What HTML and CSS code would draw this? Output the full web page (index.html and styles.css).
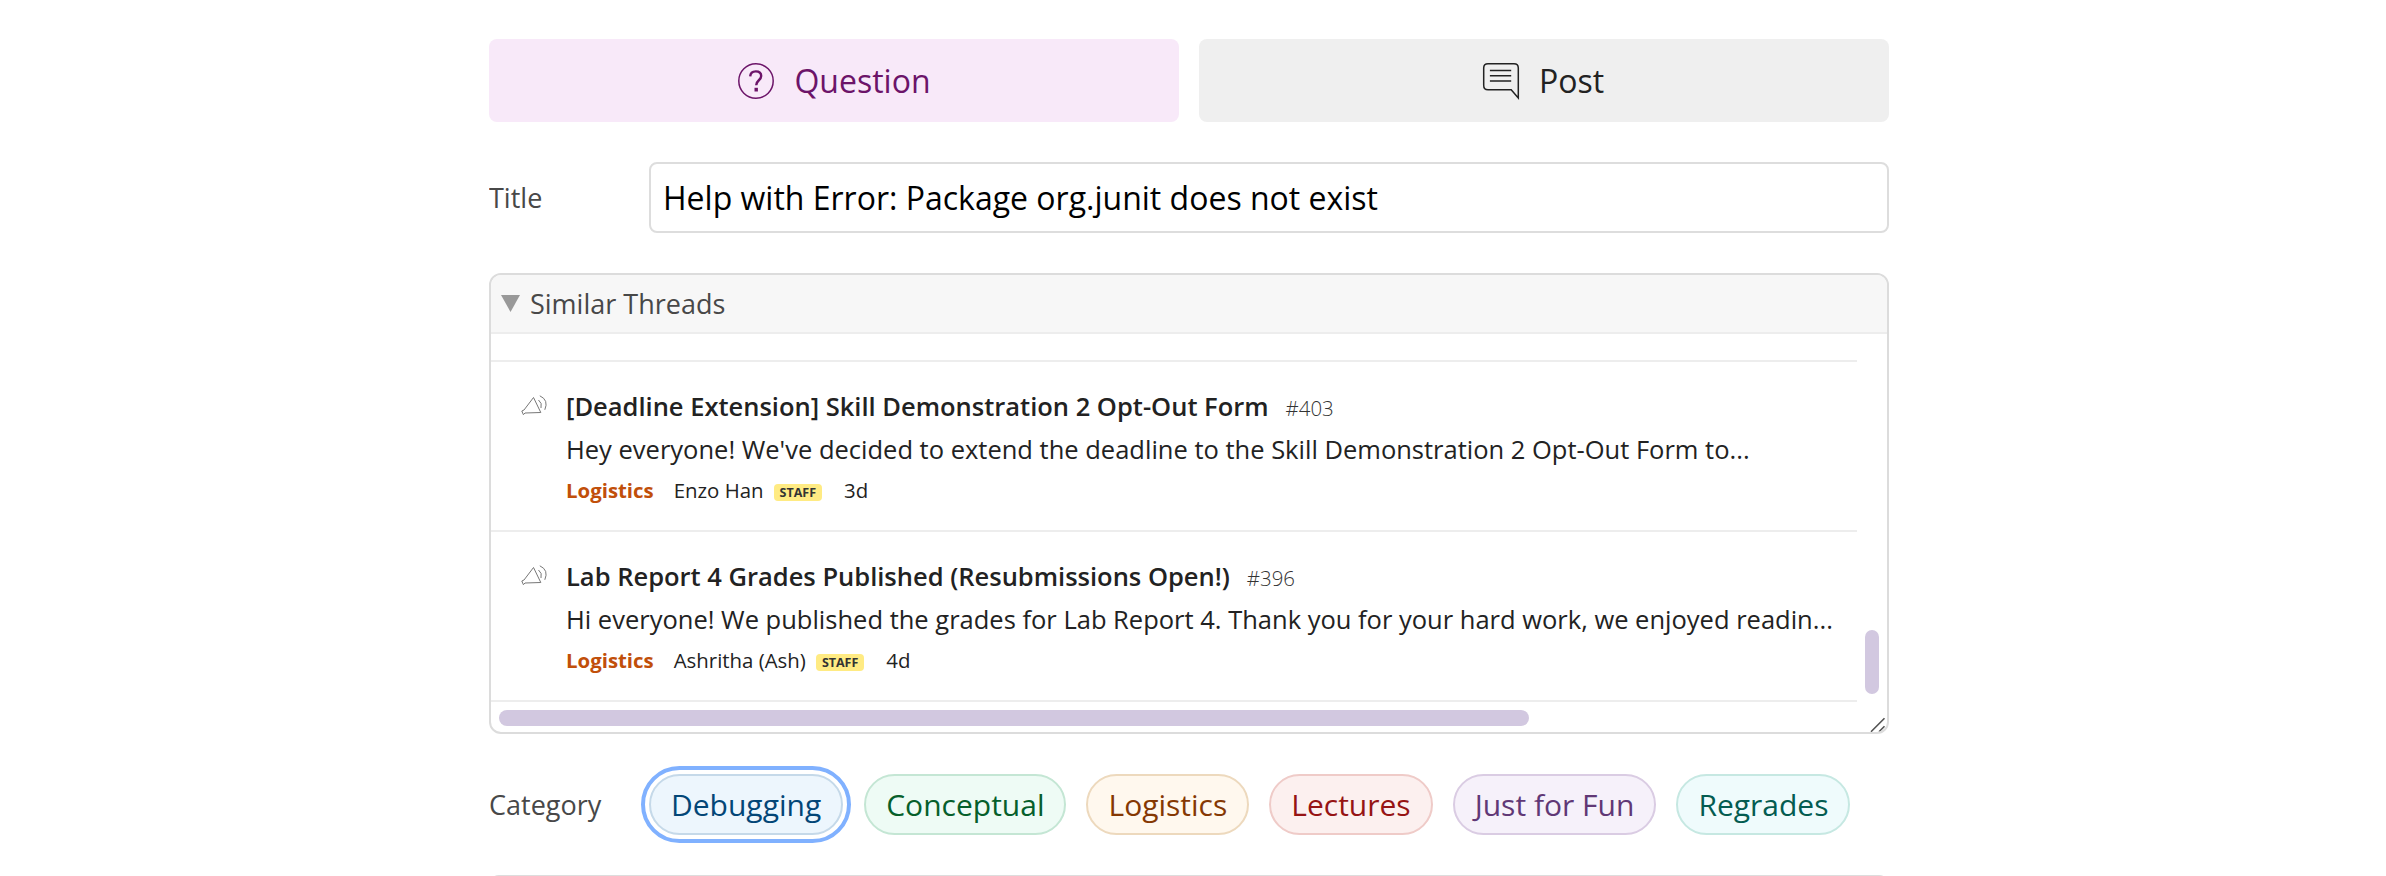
FILE: index.html
```html
<!DOCTYPE html>
<html lang="en">
<head>
<meta charset="utf-8">
<title>New Thread</title>
<link rel="stylesheet" href="styles.css">
</head>
<body>
<main class="form">
  <div class="types">
    <button class="type type-question">
      <svg class="type-icon" width="38" height="38" viewBox="0 0 38 38" fill="none" stroke="currentColor"><circle cx="19" cy="19" r="17.200" stroke-width="1.500"/><path d="M13.200 14.400C13.400 11 15.500 9.400 18.800 9.400C22.200 9.400 24.200 11.300 24.200 14.100C24.200 18.300 19.200 18.300 19.200 23.200" stroke-width="2.400"/><path d="M19.200 25.800v3.700" stroke-width="3.400"/></svg>
      <span>Question</span>
    </button>
    <button class="type type-post">
      <svg class="type-icon" width="38" height="38" viewBox="0 0 38 38" fill="none" stroke="currentColor" stroke-width="1.500"><path d="M6 1.800H32Q36.300 1.800 36.300 6V36L29.200 27.800H6Q1.700 27.800 1.700 23.500V6Q1.700 1.800 6 1.800Z"/><path d="M7.900 8.600h21.300M7.900 13.800h21.300M7.900 19h21.300"/></svg>
      <span>Post</span>
    </button>
  </div>
  <div class="field">
    <label class="label" for="title">Title</label>
    <input class="input" id="title" value="Help with Error: Package org.junit does not exist">
  </div>
  <section class="similar">
    <header class="similar-head"><span class="caret"></span><span>Similar Threads</span></header>
    <div class="similar-body">
      <div class="threads">
        <div class="thread-tail"></div>
        <article class="thread">
          <svg class="horn" width="28" height="22" viewBox="0 0 28 22" fill="none" stroke="currentColor"><path d="M12.500 2.500L19.800 17.500L4 18L2.400 19.700L0.800 16L3 15Z"/><path d="M17.500 5Q21.500 8 20 13M18.800 0.800Q28 5 23.800 14.800"/></svg>
          <div class="thread-main">
            <h3 class="thread-title">[Deadline Extension] Skill Demonstration 2 Opt-Out Form<span class="num">#403</span></h3>
            <p class="excerpt">Hey everyone! We've decided to extend the deadline to the Skill Demonstration 2 Opt-Out Form to...</p>
            <div class="meta"><b class="cat">Logistics</b><span>Enzo Han</span><span class="staff">STAFF</span><span>3d</span></div>
          </div>
        </article>
        <article class="thread">
          <svg class="horn" width="28" height="22" viewBox="0 0 28 22" fill="none" stroke="currentColor"><path d="M12.500 2.500L19.800 17.500L4 18L2.400 19.700L0.800 16L3 15Z"/><path d="M17.500 5Q21.500 8 20 13M18.800 0.800Q28 5 23.800 14.800"/></svg>
          <div class="thread-main">
            <h3 class="thread-title">Lab Report 4 Grades Published (Resubmissions Open!)<span class="num">#396</span></h3>
            <p class="excerpt">Hi everyone! We published the grades for Lab Report 4. Thank you for your hard work, we enjoyed readin...</p>
            <div class="meta"><b class="cat">Logistics</b><span>Ashritha (Ash)</span><span class="staff">STAFF</span><span>4d</span></div>
          </div>
        </article>
      </div>
      <div class="track-y"><div class="thumb-y"></div></div>
    </div>
    <div class="track-x"><div class="thumb-x"></div></div>
    <svg class="grip" width="16" height="16" viewBox="0 0 16 16" stroke="#555" stroke-width="1.600"><path d="M1 15.700L14.500 2.200M9 15.700L14.500 10.200"/></svg>
  </section>
  <div class="field categories">
    <span class="label">Category</span>
    <div class="pills">
      <button class="pill debugging">Debugging</button>
      <button class="pill conceptual">Conceptual</button>
      <button class="pill logistics">Logistics</button>
      <button class="pill lectures">Lectures</button>
      <button class="pill fun">Just for Fun</button>
      <button class="pill regrades">Regrades</button>
    </div>
  </div>
  <div class="editor"></div>
</main>
</body>
</html>
```
FILE: styles.css
```css
* { box-sizing: border-box; }
body { margin: 0; background: #fff; color: #222; font-family: "Open Sans", "Noto Sans", sans-serif; }
button { font: inherit; margin: 0; padding: 0; border: 0; }
.form { width: 1400px; height: 876px; margin-left: 489px; padding-top: 39px; overflow: hidden; }
.types { display: grid; grid-template-columns: 1fr 1fr; gap: 20px; }
.type { height: 83px; border-radius: 8px; font-size: 32px; display: flex; align-items: center; justify-content: center; gap: 19px; }
.type-question { background: #f8e9f9; color: #6c1469; }
.type-post { background: #efefef; color: #222; padding-right: 2px; }
.field { display: flex; align-items: center; margin-top: 40px; }
.label { width: 160px; font-size: 27px; color: #484848; flex: none; }
.input { flex: 1; height: 71px; border: 2px solid #ddd; border-radius: 8px; padding: 0 11px 0 12px; font: 32px "Open Sans", sans-serif; color: #000; outline: 0; }
.similar { position: relative; margin-top: 40px; height: 461px; border: 2px solid #dcdcdc; border-radius: 12px; overflow: hidden; }
.similar-head { height: 59px; background: #f7f7f7; border-bottom: 2px solid #ededed; display: flex; align-items: center; gap: 10px; padding-left: 10px; font-size: 27px; color: #484848; }
.caret { width: 19px; height: 17px; background: #999; clip-path: polygon(0 0, 100% 0, 50% 100%); }
.similar-body { display: flex; height: 368px; }
.threads { width: 1366px; }
.thread-tail { height: 28px; border-bottom: 2px solid #ededed; }
.thread { height: 170px; border-bottom: 2px solid #ededed; display: flex; padding: 26px 0 0 30px; }
.horn { color: #777; margin: 7px 17px 0 0; flex: none; }
.thread-title { margin: 0; font-size: 25.5px; font-weight: 600; line-height: 36px; white-space: nowrap; }
.num { font-size: 20.4px; font-weight: 300; line-height: 1; margin-left: 17px; color: #333; }
.excerpt { margin: 7px 0 0; font-size: 25.5px; line-height: 36px; white-space: nowrap; }
.meta { display: flex; align-items: center; margin-top: 9px; font-size: 20.4px; line-height: 28px; }
.cat { color: #c14f0a; margin-right: 20px; }
.staff { background: #ffeb83; border-radius: 4px; height: 17px; padding: 0 6px; margin: 5px 22px 0 10px; font-size: 12.5px; font-weight: 700; line-height: 17px; color: #333; }
.track-y { flex: 1; padding: 296px 0 0 8px; }
.thumb-y { width: 14px; height: 64px; border-radius: 7px; background: #d2c8e0; }
.track-x { padding: 8px; }
.thumb-x { width: 1030px; height: 16px; border-radius: 8px; background: #d2c8e0; }
.grip { position: absolute; right: 1px; bottom: 0; }
.pills { display: flex; gap: 20px; }
.pill { height: 61px; border: 2px solid; border-radius: 31px; padding: 0 20px; font-size: 30px; }
.debugging { background: #edf6fd; color: #034677; border-color: #c5d9e9; outline: 4px solid #80b1ff; outline-offset: 4px; margin-right: 1px; }
.conceptual { background: #eefbf5; color: #065f2b; border-color: #c4e6d4; }
.logistics { background: #fff8ee; color: #853803; border-color: #edd9bd; }
.lectures { background: #fcf0ef; color: #961414; border-color: #efcbc8; }
.fun { background: #f6f1fa; color: #613876; border-color: #dacce3; }
.regrades { background: #effbfc; color: #045c51; border-color: #c6e8e2; }
.editor { margin-top: 40px; height: 100px; border: 2px solid #ddd; border-radius: 10px; }
```
